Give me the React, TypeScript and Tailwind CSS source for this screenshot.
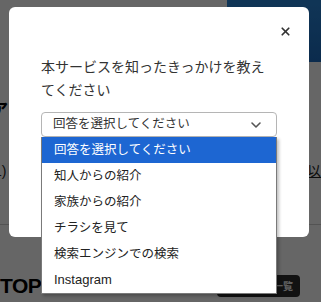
import { ChevronDown, X } from 'lucide-react'

const options = [
  '回答を選択してください',
  '知人からの紹介',
  '家族からの紹介',
  'チラシを見て',
  '検索エンジンでの検索',
  'Instagram',
]

export default function App() {
  return (
    <div className="relative w-[321px] h-[302px] overflow-hidden bg-white font-['Liberation_Sans','Noto_Sans_CJK_JP',sans-serif]">
      {/* page behind the modal */}
      <div className="flex flex-col">
        <div className="flex justify-end">
          <div className="w-[94px] h-[62px] rounded-bl-[18px] bg-gradient-to-b from-[#2a86d8] to-[#1c6cc0]" />
        </div>
        <div className="mt-[40px] h-[16px] text-[16px] leading-[16px] font-bold text-black -ml-[8px]">ア:</div>
        <div className="mt-[44px] flex items-center justify-between h-[18px] text-[14px] leading-[18px] text-[#222]">
          <span className="-ml-[6px]">1)</span>
          <span className="-mr-[14px] underline">以上</span>
        </div>
        <div className="mt-[44px] border-b border-[#d0d0d0]" />
        <div className="mt-[50px] flex items-center justify-between">
          <span className="text-[21px] leading-[22px] font-black text-black tracking-[-0.5px]">TOP</span>
          <div className="mr-[21px] w-[83px] h-[22px] rounded-[4px] bg-[#2e2e2e] flex items-center justify-end pr-[7px] text-[10px] font-bold text-[#eee]">
            お知らせ一覧
          </div>
        </div>
      </div>

      {/* overlay */}
      <div className="absolute inset-0 bg-black/60" />

      {/* modal */}
      <div className="absolute left-[9px] top-[7px] w-[300px] h-[230px] bg-white rounded-[6px] flex flex-col">
        <div className="flex justify-end pt-[15px] pr-[15px]">
          <button className="w-[18px] h-[18px] flex items-center justify-center text-[#333]">
            <X size={13} strokeWidth={3.2} />
          </button>
        </div>
        <div className="px-[32px]">
          <p className="mt-[16px] text-[14px] leading-[23px] text-[#333]">
            本サービスを知ったきっかけを教えてください
          </p>
          <div className="mt-[10px] h-[25px] border border-[#b5b5b5] rounded-[4px] pl-[11px] pr-[12px] flex items-center justify-between text-[12.5px] text-[#333]">
            <span>回答を選択してください</span>
            <ChevronDown size={16} strokeWidth={2.4} className="text-[#555]" />
          </div>
        </div>
      </div>

      {/* native select dropdown */}
      <ul className="absolute left-[41px] top-[137px] w-[236px] bg-white border border-t-0 border-[#7a7a7a] shadow-[2px_2px_3px_rgba(0,0,0,0.25)]">
        {options.map((opt, i) => (
          <li
            key={opt}
            className={`h-[26px] pl-[12px] flex items-center text-[12.5px] ${
              i === 0 ? 'bg-[#1d66d2] text-white' : 'text-[#222]'
            } ${opt === 'Instagram' ? 'text-[13px]' : ''}`}
          >
            {opt}
          </li>
        ))}
      </ul>
    </div>
  )
}
